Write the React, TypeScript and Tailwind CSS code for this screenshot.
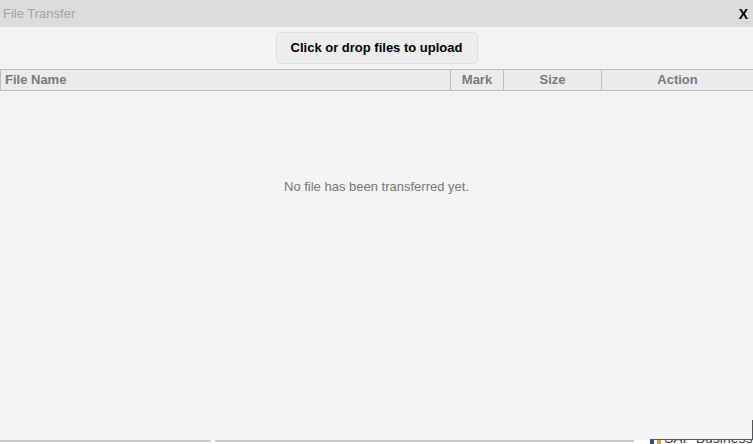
import React from "react";

export default function App() {
  return (
    <div
      className="relative w-[753px] h-[444px] bg-white overflow-hidden"
      style={{ fontFamily: '"Liberation Sans", Arial, sans-serif' }}
    >
      <div className="flex flex-col w-[753px] h-[440px] bg-[#f4f4f4]">
        <div className="flex items-center justify-between h-[27px] bg-[#dcdcdc] pl-[3px] pr-[5px] pt-[1px]">
          <span className="text-[13px] text-[#a3a3a3]">File Transfer</span>
          <span className="text-[14px] font-bold text-black">X</span>
        </div>
        <div className="flex justify-center pt-[5px] pb-[5px]">
          <button className="w-[202px] h-[32px] rounded-[5px] border border-[#dedede] bg-[#ededed] text-[13px] font-bold text-black">
            Click or drop files to upload
          </button>
        </div>
        <div className="flex h-[22px] border-y border-l border-[#bcbcbc] bg-[#ebebeb] text-[13px] font-bold text-[#7a7a7a]">
          <div className="w-[450px] flex items-center pl-[4px] border-r border-[#bcbcbc]">File Name</div>
          <div className="w-[53px] flex items-center justify-center border-r border-[#bcbcbc]">Mark</div>
          <div className="w-[98px] flex items-center justify-center border-r border-[#bcbcbc]">Size</div>
          <div className="flex-1 flex items-center justify-center">Action</div>
        </div>
        <div className="flex justify-center pt-[86px] text-[13px] text-[#777777]">
          No file has been transferred yet.
        </div>
      </div>
      <div className="absolute left-0 top-[440px] w-[211px] h-[2px] bg-[#c9cdc9]" />
      <div className="absolute left-[215px] top-[440px] w-[419px] h-[2px] bg-[#c9cdc9]" />
      <div className="absolute right-0 top-[420px] w-[1px] h-[20px] bg-[#555555]" />
      <div className="absolute left-[650px] top-[439px] w-[103px] h-[1px] bg-[#555555]" />
      <div className="absolute left-[650px] top-[440px] w-[103px] h-[4px] overflow-hidden">
        <div className="flex items-center gap-[3px] -mt-[9px]">
          <span className="w-[4px] h-[12px] bg-[#2d4f8f]" />
          <span className="w-[4px] h-[12px] bg-[#d9a53a]" />
          <span className="text-[14px] text-[#444444] leading-[14px]">SAP Business</span>
        </div>
      </div>
    </div>
  );
}
